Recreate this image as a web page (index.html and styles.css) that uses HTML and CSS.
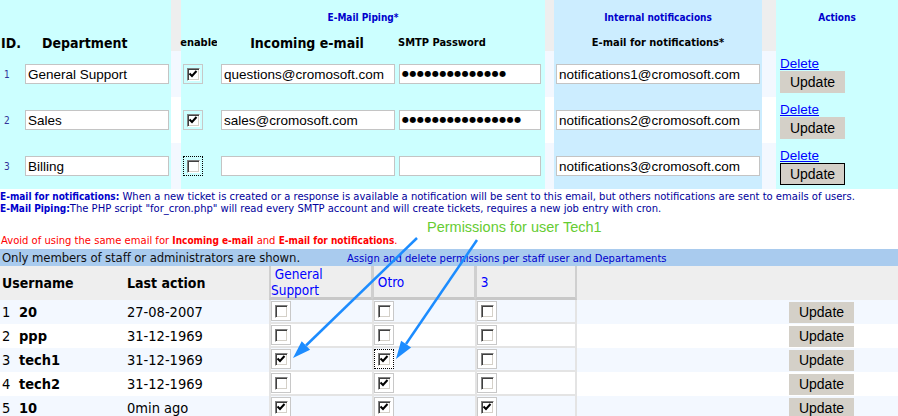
FILE: index.html
```html
<!DOCTYPE html>
<html>
<head>
<meta charset="utf-8">
<title>Departments</title>
<link rel="stylesheet" href="styles.css">
</head>
<body>
<div class="depts">
  <div class="c cy span2"></div>
  <div class="c gap hdr"></div>
  <div class="c cy span3 th-blue">E-Mail Piping*</div>
  <div class="c gap hdr"></div>
  <div class="c lb th-blue">Internal notificacions</div>
  <div class="c gap hdr"></div>
  <div class="c cy th-blue">Actions</div>

  <div class="c cy th th-id">ID.</div>
  <div class="c cy th th-big th-dept">Department</div>
  <div class="c cy th th-sm mid">enable</div>
  <div class="c cy th th-big mid">Incoming e-mail</div>
  <div class="c cy th th-xs">SMTP Password</div>
  <div class="c lb th th-sm mid">E-mail for notifications*</div>
  <div class="c cy"></div>

  <div class="c cy row idn">1</div>
  <div class="c cy row"><input class="inp w-dept" type="text" value="General Support"></div>
  <div class="c gap odd"></div>
  <div class="c cy row"><span class="box top-box"><span class="cb"><svg class="tick" viewBox="0 0 13 13"><polyline points="2.5,5.5 5,8 9.5,3"/></svg></span></span></div>
  <div class="c cy row"><input class="inp w-in" type="text" value="questions@cromosoft.com"></div>
  <div class="c cy row"><div class="inp w-pw pw">●●●●●●●●●●●●●●</div></div>
  <div class="c gap odd"></div>
  <div class="c lb row"><input class="inp w-nt" type="text" value="notifications1@cromosoft.com"></div>
  <div class="c gap odd"></div>
  <div class="c cy act"><a href="#">Delete</a><button class="btn" type="button">Update</button></div>

  <div class="c cy row idn">2</div>
  <div class="c cy row"><input class="inp w-dept" type="text" value="Sales"></div>
  <div class="c gap even"></div>
  <div class="c cy row"><span class="box top-box"><span class="cb"><svg class="tick" viewBox="0 0 13 13"><polyline points="2.5,5.5 5,8 9.5,3"/></svg></span></span></div>
  <div class="c cy row"><input class="inp w-in" type="text" value="sales@cromosoft.com"></div>
  <div class="c cy row"><div class="inp w-pw pw">●●●●●●●●●●●●●●●●</div></div>
  <div class="c gap even"></div>
  <div class="c lb row"><input class="inp w-nt" type="text" value="notifications2@cromosoft.com"></div>
  <div class="c gap even"></div>
  <div class="c cy act"><a href="#">Delete</a><button class="btn" type="button">Update</button></div>

  <div class="c cy row idn">3</div>
  <div class="c cy row"><input class="inp w-dept" type="text" value="Billing"></div>
  <div class="c gap odd"></div>
  <div class="c cy row"><span class="box top-box focus"><span class="cb"></span></span></div>
  <div class="c cy row"><input class="inp w-in" type="text" value=""></div>
  <div class="c cy row"><div class="inp w-pw pw"></div></div>
  <div class="c gap odd"></div>
  <div class="c lb row"><input class="inp w-nt" type="text" value="notifications3@cromosoft.com"></div>
  <div class="c gap odd"></div>
  <div class="c cy act"><a href="#">Delete</a><button class="btn btn-focus" type="button">Update</button></div>
</div>

<div class="notes">
  <div><b>E-mail for notifications:</b> When a new ticket is created or a response is available a notification will be sent to this email, but others notifications are sent to emails of users.</div>
  <div><b>E-Mail Piping:</b>The PHP script "for_cron.php" will read every SMTP account and will create tickets, requires a new job entry with cron.</div>
</div>
<div class="warn">Avoid of using the same email for <b>Incoming e-mail</b> and <b>E-mail for notifications</b>.</div>
<div class="bar"><span class="bar-main">Only members of staff or administrators are shown.</span><span class="bar-sub">Assign and delete permissions per staff user and Departaments</span></div>

<div class="perms">
  <div class="ph ph-user">Username</div>
  <div class="ph ph-date">Last action</div>
  <div class="ph pd">&nbsp;General Support</div>
  <div class="ph pd">&nbsp;Otro</div>
  <div class="ph pd pd-last">&nbsp;3</div>
  <div class="ph"></div>

  <div class="pr odd pu"><span class="un">1</span><b>20</b></div>
  <div class="pr odd pdate">27-08-2007</div>
  <div class="pr odd dc"><span class="box"><span class="cb"></span></span></div>
  <div class="pr odd dc"><span class="box"><span class="cb"></span></span></div>
  <div class="pr odd dc dc-last"><span class="box"><span class="cb"></span></span></div>
  <div class="pr odd pact"><button class="btn btn-sm" type="button">Update</button></div>

  <div class="pr even pu"><span class="un">2</span><b>ppp</b></div>
  <div class="pr even pdate">31-12-1969</div>
  <div class="pr even dc"><span class="box"><span class="cb"></span></span></div>
  <div class="pr even dc"><span class="box"><span class="cb"></span></span></div>
  <div class="pr even dc dc-last"><span class="box"><span class="cb"></span></span></div>
  <div class="pr even pact"><button class="btn btn-sm" type="button">Update</button></div>

  <div class="pr odd pu"><span class="un">3</span><b>tech1</b></div>
  <div class="pr odd pdate">31-12-1969</div>
  <div class="pr odd dc"><span class="box"><span class="cb"><svg class="tick" viewBox="0 0 13 13"><polyline points="2.5,5.5 5,8 9.5,3"/></svg></span></span></div>
  <div class="pr odd dc"><span class="box focus"><span class="cb"><svg class="tick" viewBox="0 0 13 13"><polyline points="2.5,5.5 5,8 9.5,3"/></svg></span></span></div>
  <div class="pr odd dc dc-last"><span class="box"><span class="cb"></span></span></div>
  <div class="pr odd pact"><button class="btn btn-sm" type="button">Update</button></div>

  <div class="pr even pu"><span class="un">4</span><b>tech2</b></div>
  <div class="pr even pdate">31-12-1969</div>
  <div class="pr even dc"><span class="box"><span class="cb"></span></span></div>
  <div class="pr even dc"><span class="box"><span class="cb"><svg class="tick" viewBox="0 0 13 13"><polyline points="2.5,5.5 5,8 9.5,3"/></svg></span></span></div>
  <div class="pr even dc dc-last"><span class="box"><span class="cb"></span></span></div>
  <div class="pr even pact"><button class="btn btn-sm" type="button">Update</button></div>

  <div class="pr odd pu"><span class="un">5</span><b>10</b></div>
  <div class="pr odd pdate">0min ago</div>
  <div class="pr odd dc"><span class="box"><span class="cb"><svg class="tick" viewBox="0 0 13 13"><polyline points="2.5,5.5 5,8 9.5,3"/></svg></span></span></div>
  <div class="pr odd dc"><span class="box"><span class="cb"><svg class="tick" viewBox="0 0 13 13"><polyline points="2.5,5.5 5,8 9.5,3"/></svg></span></span></div>
  <div class="pr odd dc dc-last"><span class="box"><span class="cb"><svg class="tick" viewBox="0 0 13 13"><polyline points="2.5,5.5 5,8 9.5,3"/></svg></span></span></div>
  <div class="pr odd pact"><button class="btn btn-sm" type="button">Update</button></div>
</div>

<div class="annot">Permissions for user Tech1</div>
<svg class="arrows" width="898" height="416" viewBox="0 0 898 416">
  <line x1="417" y1="238" x2="306" y2="345.5"/>
  <polygon points="293,358 310.1,349.8 301.7,341.2"/>
  <line x1="477" y1="240" x2="406" y2="344"/>
  <polygon points="396,359 411.1,347.5 401.1,340.7"/>
</svg>
</body>
</html>
```

FILE: styles.css
```css
* { box-sizing: border-box; }

html, body { margin: 0; padding: 0; }

body {
  width: 898px;
  height: 416px;
  overflow: hidden;
  position: relative;
  background: #ffffff;
  color: #000;
  font-family: "DejaVu Sans Condensed", "DejaVu Sans", sans-serif;
}

/* ---------- departments table ---------- */
.depts {
  display: grid;
  grid-template-columns: 22px 149px 10px 36px 180px 148px 9px 208px 14px 122px;
  grid-template-rows: 34px 17px 46px 46px 46px;
}

.c { display: flex; align-items: center; min-width: 0; }
.cy { background: #ccffff; }
.lb { background: #ccedff; }
.gap.hdr { background: #eeeeee; grid-row: span 2; }
.gap.odd { background: #f3f8ff; }
.gap.even { background: #ffffff; }
.span2 { grid-column: span 2; }
.span3 { grid-column: span 3; }

.th-blue {
  justify-content: center;
  color: #0000cc;
  font-weight: bold;
  font-size: 10px;
}

.th { font-weight: bold; white-space: nowrap; }
.th-id { font-size: 14px; padding-left: 1px; }
.th-big { font-size: 14px; }
.th-dept { padding-left: 20px; }
.th-sm { font-size: 11px; }
.th-xs { font-size: 11px; padding-left: 1px; }
.mid { justify-content: center; }

.idn {
  font-size: 10px;
  color: #333399;
  padding-left: 4px;
}

.inp {
  display: block;
  height: 20px;
  border: 1px solid #c4c4c4;
  background: #ffffff;
  padding: 0 2px;
  font-family: "Liberation Sans", Arial, sans-serif;
  font-size: 13.5px;
  color: #000;
  outline: none;
  margin: 0;
}
.w-dept { width: 144px; margin-left: 3px; }
.w-in { width: 174px; margin-left: 4px; }
.w-pw { width: 142px; margin-left: 2px; }
.w-nt { width: 204px; margin-left: 2px; }

.pw {
  font-family: "DejaVu Sans", sans-serif;
  font-size: 8px;
  line-height: 18px;
  letter-spacing: 0.5px;
  padding-left: 2px;
  white-space: nowrap;
  overflow: hidden;
}

.box {
  display: flex;
  align-items: center;
  justify-content: center;
  width: 20px;
  height: 20px;
  border: 1px solid #c8c8c8;
  background: #ffffff;
}
.top-box { margin-left: 2px; background: transparent; }
.box.focus { border: 1px dotted #000; }

.cb {
  position: relative;
  display: block;
  width: 13px;
  height: 13px;
  background: #ffffff;
  border: 1px solid;
  border-color: #808080 #ffffff #ffffff #808080;
  box-shadow: inset 1px 1px 0 #404040, inset -1px -1px 0 #d4d0c8;
}
.tick {
  position: absolute;
  left: -1px;
  top: -1px;
  width: 13px;
  height: 13px;
}
.tick polyline {
  fill: none;
  stroke: #000;
  stroke-width: 2;
}

.act {
  flex-direction: column;
  align-items: flex-start;
  padding: 5px 0 0 4px;
}
.act a {
  font-family: "Liberation Sans", Arial, sans-serif;
  font-size: 13.5px;
  line-height: 15px;
  color: #0000ff;
  text-decoration: underline;
}

.btn {
  display: block;
  width: 65px;
  height: 22px;
  margin: 0;
  padding: 0;
  border: 1px solid #d4d0c8;
  background: #d4d0c8;
  color: #000;
  font-family: "Liberation Sans", Arial, sans-serif;
  font-size: 14px;
}
.btn-focus { border-color: #000; }
.btn-sm { height: 21px; }

/* ---------- notes ---------- */
.notes {
  padding-top: 2px;
  font-family: "DejaVu Sans", sans-serif;
  font-size: 10px;
  line-height: 12px;
  color: #00009c;
  white-space: nowrap;
}
.notes b {
  font-family: "DejaVu Sans Condensed", "DejaVu Sans", sans-serif;
  color: #0000cc;
}

.warn {
  margin-top: 20px;
  font-family: "DejaVu Sans", sans-serif;
  font-size: 10px;
  line-height: 12px;
  color: #ff0000;
  padding-left: 1px;
  white-space: nowrap;
}
.warn b { font-family: "DejaVu Sans Condensed", "DejaVu Sans", sans-serif; }

.bar {
  margin-top: 2px;
  height: 17px;
  background: #a9cbee;
  display: flex;
  align-items: baseline;
  padding-left: 2px;
  white-space: nowrap;
}
.bar-main { font-size: 13px; letter-spacing: -0.1px; line-height: 17px; color: #111; }
.bar-sub {
  font-family: "DejaVu Sans", sans-serif;
  font-size: 10px;
  color: #0000cc;
  margin-left: 47px;
}

/* ---------- permissions table ---------- */
.perms {
  display: grid;
  grid-template-columns: 124px 145px 103px 103px 102px 1fr;
  grid-template-rows: 34px repeat(5, 24px);
}

.ph {
  background: #eeeeee;
  display: flex;
  align-items: center;
  font-size: 14px;
  font-weight: bold;
}
.ph-user { padding-left: 2px; }
.ph-date { padding-left: 3px; }
.pd {
  font-weight: normal;
  color: #0000ff;
  font-size: 13.5px;
  line-height: 16px;
  border-left: 2px solid #cfcfcf;
  border-right: 1px solid #cfcfcf;
  border-bottom: 3px solid #c8c8c8;
}
.pd-last { border-right: 2px solid #cfcfcf; }

.pr { display: flex; align-items: center; font-size: 14.5px; }
.pr.odd { background: #f3f8ff; }
.pr.even { background: #ffffff; }
.pu { padding-left: 2px; }
.un { display: inline-block; width: 17px; }
.pdate { padding-left: 3px; }

.dc {
  border-left: 2px solid #e4e4e4;
  border-bottom: 2px solid #e4e4e4;
}
.dc-last { border-right: 2px solid #e4e4e4; }

.pact { padding-left: 212px; }

/* ---------- annotation overlay ---------- */
.annot {
  position: absolute;
  left: 427px;
  top: 220px;
  font-family: "Liberation Sans", Arial, sans-serif;
  font-size: 14.5px;
  line-height: 15px;
  color: #66cc33;
  white-space: nowrap;
}
.arrows {
  position: absolute;
  left: 0;
  top: 0;
  pointer-events: none;
}
.arrows line { stroke: #1c8cff; stroke-width: 2.5; }
.arrows polygon { fill: #1c8cff; }
```
